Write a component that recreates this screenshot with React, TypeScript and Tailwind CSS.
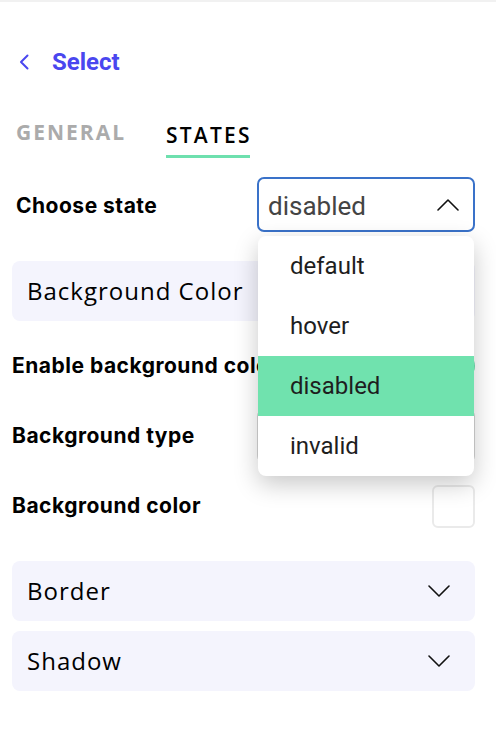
import React from "react";

const montserrat = { fontFamily: '"Open Sans", "Noto Sans", sans-serif' };

function ChevronDown() {
  return (
    <svg width="22" height="12" viewBox="0 0 22 12" fill="none">
      <polyline points="1,1 11,11 21,1" stroke="#111" strokeWidth="1.6" strokeLinecap="round" strokeLinejoin="round" />
    </svg>
  );
}

function ChevronUp() {
  return (
    <svg width="22" height="12" viewBox="0 0 22 12" fill="none">
      <polyline points="1,11 11,1 21,11" stroke="#111" strokeWidth="1.6" strokeLinecap="round" strokeLinejoin="round" />
    </svg>
  );
}

function Card({ title, icon }: { title: string; icon: React.ReactNode }) {
  return (
    <div className="h-[60px] rounded-[8px] bg-[#f4f4fd] flex items-center justify-between pl-[15px] pr-[25px]">
      <span className="text-[24px] font-medium text-black tracking-[1px]" style={montserrat}>{title}</span>
      {icon}
    </div>
  );
}

function Row({ label, children }: { label: string; children?: React.ReactNode }) {
  return (
    <div className="h-[70px] flex items-center justify-between">
      <span className="text-[21px] font-bold text-black tracking-[0.5px] font-['Inter',sans-serif] whitespace-nowrap">{label}</span>
      {children}
    </div>
  );
}

const options = ["default", "hover", "disabled", "invalid"];

export default function App() {
  return (
    <div className="w-[496px] h-[732px] bg-white overflow-hidden">
      <div className="h-[2px] bg-[#f1f1f1]" />
      <div className="h-[116px] flex items-center pl-[19px] pt-[3px] gap-[23px]">
        <svg width="10" height="16" viewBox="0 0 10 16" fill="none">
          <polyline points="8.5,1.5 2,8 8.5,14.5" stroke="#4a47ef" strokeWidth="2" strokeLinecap="round" strokeLinejoin="round" />
        </svg>
        <span className="text-[24px] font-bold text-[#4a47ef] font-['Roboto',sans-serif]">Select</span>
      </div>

      <div className="pl-4 pt-[5px] flex gap-[40px]" style={montserrat}>
        <div className="flex flex-col">
          <span className="text-[21px] leading-[24px] font-bold text-[#ababab] tracking-[2px] -mt-[3px]">GENERAL</span>
        </div>
        <div className="flex flex-col">
          <span className="text-[21px] leading-[24px] font-semibold text-black tracking-[2.2px] -mr-[2px]">STATES</span>
          <div className="mt-[8px] h-[3px] bg-[#6ee0ae]" />
        </div>
      </div>

      <div className="px-3 pt-[19px]">
        <div className="flex items-center justify-between pl-1">
          <span className="text-[21px] font-bold text-black tracking-[0.5px] font-['Inter',sans-serif] mt-[2px]">Choose state</span>
          <div className="relative w-[218px] mr-[9px]">
            <div className="h-[55px] border-2 border-[#3a72c9] rounded-[7px] flex items-center justify-between pl-[9px] pr-[14px] bg-white">
              <span className="text-[26px] text-[#444] font-['Roboto',sans-serif] mt-[4px]">disabled</span>
              <ChevronUp />
            </div>
            <div className="absolute z-10 left-[1px] top-[59px] w-[216px] bg-white rounded-[8px] overflow-hidden shadow-[0_8px_24px_rgba(0,0,0,0.22)]">
              {options.map(o => (
                <div
                  key={o}
                  className={
                    o === "disabled"
                      ? "h-[60px] flex items-center pl-[32px] bg-[#70e2ae] text-[24px] text-[#1e1e1e] font-['Roboto',sans-serif]"
                      : "h-[60px] flex items-center pl-[32px] text-[24px] text-[#1e1e1e] font-['Roboto',sans-serif]"
                  }
                >
                  {o}
                </div>
              ))}
            </div>
          </div>
        </div>

        <div className="mt-[29px] mr-[9px]">
          <Card title="Background Color" icon={<ChevronUp />} />
        </div>

        <div className="mt-[10px] mr-[9px]">
          <Row label="Enable background color">
            <div className="w-[46px] h-[26px] rounded-full bg-[#6ee0ae] relative shrink-0">
              <div className="absolute right-[3px] top-[3px] w-[20px] h-[20px] rounded-full bg-white" />
            </div>
          </Row>
          <Row label="Background type">
            <div className="w-[218px] h-[54px] border border-[#d5d5d5] rounded-[7px]" />
          </Row>
          <Row label="Background color">
            <div className="w-[43px] h-[43px] border-2 border-[#eaeaea] rounded-[6px]" />
          </Row>
        </div>

        <div className="mt-[20px] mr-[9px] flex flex-col gap-[10px]">
          <Card title="Border" icon={<ChevronDown />} />
          <Card title="Shadow" icon={<ChevronDown />} />
        </div>
      </div>
    </div>
  );
}
